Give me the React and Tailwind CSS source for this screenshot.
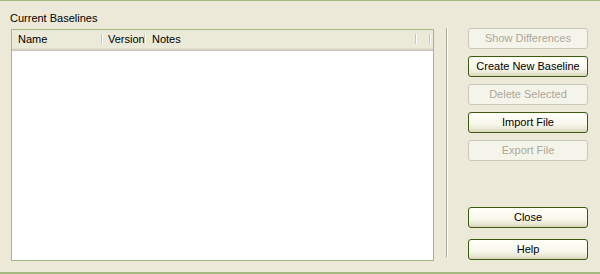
import React from "react";

const font = { fontFamily: '"Liberation Sans", Arial, sans-serif' };

function Btn({ children, disabled }) {
  if (disabled) {
    return (
      <div className="h-[21px] w-[120px] rounded-[3px] border border-[#CAC8BB] bg-[#F5F4EA] text-[#ACA899] text-[11px] flex items-center justify-center">
        {children}
      </div>
    );
  }
  return (
    <div className="h-[21px] w-[120px] rounded-[3px] border border-[#3D5A12] bg-[linear-gradient(to_bottom,#FFFFF8_0%,#F8F7EC_60%,#E9E6D2_85%,#D9D4BC_100%)] text-black text-[11px] flex items-center justify-center">
      {children}
    </div>
  );
}

function Sep() {
  return (
    <div className="flex h-[10px] self-center">
      <div className="w-px h-full bg-[#CBC7B8]" />
      <div className="w-px h-full bg-white" />
    </div>
  );
}

export default function App() {
  return (
    <div
      style={font}
      className="w-[600px] h-[274px] bg-[#ECE9D8] border-t border-[#A4B97F] flex flex-col relative"
    >
      <div className="pl-[10px] pt-[11px] h-[27px] text-[11px] leading-[13px] text-black">
        Current Baselines
      </div>
      <div className="flex items-start">
        <div className="ml-[11px] mt-px w-[423px] h-[232px] border border-[#A4B97F] bg-white flex flex-col">
          <div className="h-[21px] flex flex-col">
            <div className="h-[18px] bg-[#EBEAD8] flex items-center text-[11px] text-black">
              <div className="w-[89px] pl-[6px]">Name</div>
              <Sep />
              <div className="w-[41px] pl-[5px]">Version</div>
              <Sep />
              <div className="w-[269px] pl-[6px]">Notes</div>
              <Sep />
              <div className="w-[12px]" />
              <Sep />
            </div>
            <div className="h-px bg-[#E2DECD]" />
            <div className="h-px bg-[#D6D2C2]" />
            <div className="h-px bg-[#CBC7B8]" />
          </div>
        </div>
        <div className="ml-[12px] flex h-[229px]">
          <div className="w-px bg-[#ACA899]" />
          <div className="w-px bg-white" />
        </div>
        <div className="ml-[20px] flex flex-col h-[232px]">
          <div className="flex flex-col gap-[7px]">
            <Btn disabled>Show Differences</Btn>
            <Btn>Create New Baseline</Btn>
            <Btn disabled>Delete Selected</Btn>
            <Btn>Import File</Btn>
            <Btn disabled>Export File</Btn>
          </div>
          <div className="mt-auto flex flex-col gap-[11px]">
            <Btn>Close</Btn>
            <Btn>Help</Btn>
          </div>
        </div>
      </div>
      <div className="mt-auto h-[2px] bg-[#A4B97F]" />
    </div>
  );
}
